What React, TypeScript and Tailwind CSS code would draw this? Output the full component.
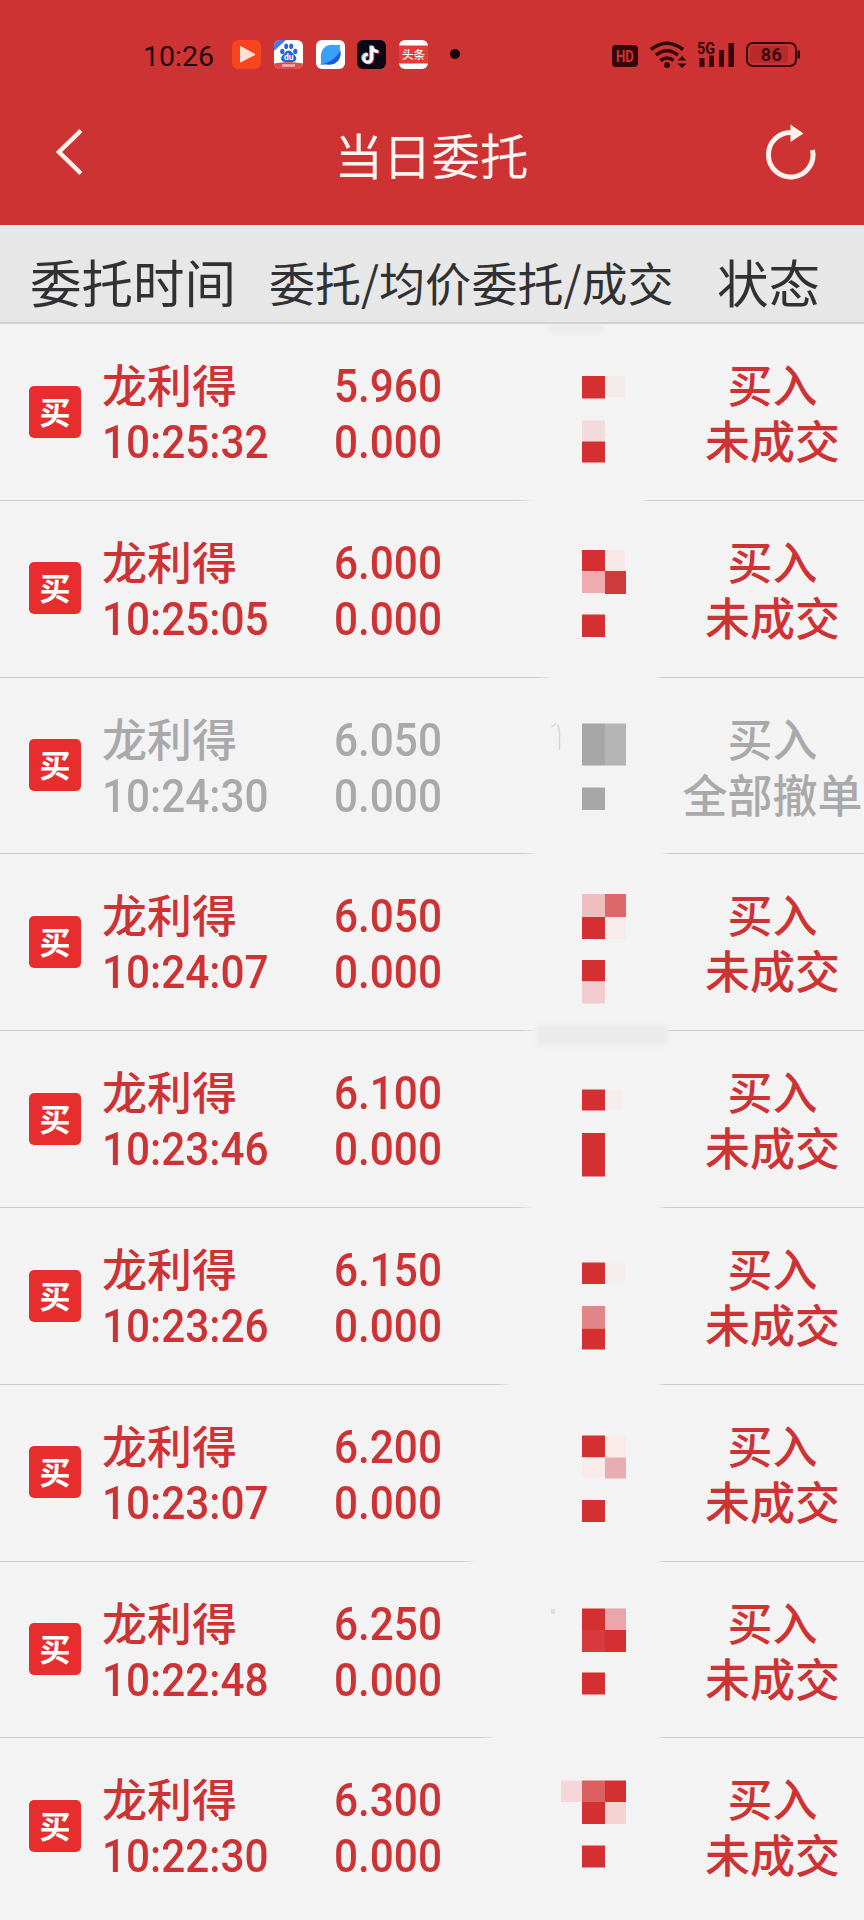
import { useState } from "react";

type Cell = [x: number, y: number, w: number, h: number, fill: string];

interface Order {
  time: string;
  price: string;
  status: string;
  cancelled?: boolean;
  cells: Cell[];
  // divider under the row: where the left part ends and the right part starts
  divider?: [left: number, right: number];
}

const RED = "#d43031";
const FAINT = "#f6ebeb";
const GREY = "#a7a7a7";

const ORDERS: Order[] = [
  {
    time: "10:25:32",
    price: "5.960",
    status: "未成交",
    divider: [533, 641],
    cells: [
      [32, 52, 23, 22.5, RED],
      [55, 52, 20, 21, FAINT],
      [32, 96.5, 23, 21, "#f3dadc"],
      [32, 117.5, 23, 21, RED],
    ],
  },
  {
    time: "10:25:05",
    price: "6.000",
    status: "未成交",
    divider: [553, 655],
    cells: [
      [32, 49, 23, 21, RED],
      [55, 49, 20, 21, "#f9e8e7"],
      [32, 70, 23, 22, "#eeacb0"],
      [55, 70, 21, 23, "#cf3a3b"],
      [32, 113.5, 23, 22.5, RED],
    ],
  },
  {
    time: "10:24:30",
    price: "6.050",
    status: "全部撤单",
    cancelled: true,
    divider: [540, 661],
    cells: [
      [32, 45.5, 23, 42, GREY],
      [55, 45.5, 21, 42, "#b4b4b4"],
      [32, 109.5, 23, 22.5, GREY],
    ],
  },
  {
    time: "10:24:07",
    price: "6.050",
    status: "未成交",
    divider: [537, 664],
    cells: [
      [32, 40, 23, 23, "#f1bebf"],
      [55, 40, 21, 23, "#dd686a"],
      [32, 63, 23, 22, RED],
      [55, 63, 21, 22, "#f7ebeb"],
      [32, 106, 23, 21.5, RED],
      [32, 127.5, 23, 22, "#f1cdd0"],
    ],
  },
  {
    time: "10:23:46",
    price: "6.100",
    status: "未成交",
    divider: [533, 658],
    cells: [
      [32, 58.5, 23, 21, RED],
      [55, 58.5, 18, 21, "#f5eeee"],
      [32, 102, 23, 43.5, RED],
    ],
  },
  {
    time: "10:23:26",
    price: "6.150",
    status: "未成交",
    divider: [512, 656],
    cells: [
      [32, 54.5, 23, 21.5, RED],
      [55, 54.5, 20, 21, "#f5eeee"],
      [32, 98, 23, 22.5, "#e2868a"],
      [32, 120.5, 23, 21, RED],
    ],
  },
  {
    time: "10:23:07",
    price: "6.200",
    status: "未成交",
    divider: [476, 656],
    cells: [
      [32, 50.5, 23, 22, RED],
      [55, 50.5, 21, 22, "#f9ebea"],
      [32, 72.5, 23, 20, "#f8ebeb"],
      [55, 72.5, 21, 21, "#e8adb0"],
      [32, 115, 23, 22, RED],
    ],
  },
  {
    time: "10:22:48",
    price: "6.250",
    status: "未成交",
    divider: [496, 656],
    cells: [
      [32, 46.5, 23, 21.5, RED],
      [55, 46.5, 21, 21.5, "#e9a6ab"],
      [32, 68, 23, 22, "#d63a3c"],
      [55, 68, 21, 22, RED],
      [32, 110.5, 23, 22, RED],
      [1, 47, 4, 5, "#dddddd"],
    ],
  },
  {
    time: "10:22:30",
    price: "6.300",
    status: "未成交",
    cells: [
      [11, 42.5, 21, 21.5, "#f6d7d9"],
      [32, 42.5, 23, 21.5, "#da6062"],
      [55, 42.5, 21, 21.5, RED],
      [32, 64, 23, 22, RED],
      [55, 64, 21, 22, "#f6d3d3"],
      [32, 107.5, 23, 22, RED],
    ],
  },
];

function AppIcons() {
  return (
    <div className="flex gap-[12.8px]">
      <svg width="29" height="29" viewBox="0 0 29 29">
        <rect width="29" height="29" rx="6" fill="#f8441f" />
        <path d="M8.5 6.5v15.5L23 14.5z" fill="#ffe3d5" stroke="#ffe3d5" strokeLinejoin="round" />
      </svg>
      <svg width="29" height="29" viewBox="0 0 29 29">
        <rect width="29" height="29" rx="6" fill="#fff" />
        <path d="M0 11V6a6 6 0 0 1 6-6h6z" fill="#4b78e0" />
        <g fill="#2a62d9">
          <ellipse cx="8.3" cy="11.5" rx="2.1" ry="2.8" />
          <ellipse cx="12.2" cy="6.3" rx="2" ry="2.8" />
          <ellipse cx="17.2" cy="6.3" rx="2" ry="2.8" />
          <ellipse cx="21.3" cy="11.5" rx="2.1" ry="2.8" />
          <path d="M14.7 10.5c3 0 4 3 6 4.8c3 3 1.5 6.7-2 6.700h-8c-3.500 0-5-3.700-2-6.700c2-1.800 3-4.800 6-4.800z" />
        </g>
        <text x="14.7" y="20" textAnchor="middle" fill="#fff" fontSize="8.5" fontWeight="700" fontFamily="Roboto, sans-serif">du</text>
        <path d="M0 23.5q14.5-3 29 0a6 6 0 0 1-6 5.5H6a6 6 0 0 1-6-5.5z" fill="#df4a4a" />
        <path d="M8 25.5h13" stroke="#f3b5b0" strokeWidth="2.5" />
      </svg>
      <svg width="29" height="29" viewBox="0 0 29 29">
        <rect width="29" height="29" rx="6" fill="#fff" />
        <path d="M24.5 4.5c-1 2-.8 3.5-.2 6.5c1.5 8-4 13.5-10.3 13.5c-3 0-5-1-9.5.3c1-2.5.5-4 .4-7C4.5 9 10 4.8 15.5 4.8c3.5 0 6 .9 9-.3z" fill="#39a0fb" />
        <path d="M24.5 11c.8 8-4 13.5-10.5 13.5c-3 0-5-1-9.5.3C14 22.5 20 18 24.5 11z" fill="#1c57d8" />
      </svg>
      <svg width="29" height="29" viewBox="0 0 29 29">
        <rect width="29" height="29" rx="6" fill="#0c0714" />
        <g fill="none" strokeWidth="3">
          <path d="M14.5 6v12.3a4 4 0 1 1-4-4M14.5 6c.5 3.5 3 5.5 6.5 5.6" stroke="#35e3e6" transform="translate(-.8 -.6)" />
          <path d="M15 6v12.3a4 4 0 1 1-4-4M15 6c.5 3.5 3 5.5 6.5 5.6" stroke="#f0305a" transform="translate(.8 .6)" />
          <path d="M14.8 6v12.3a4 4 0 1 1-4-4M14.8 6c.5 3.5 3 5.5 6.5 5.6" stroke="#fff" />
        </g>
      </svg>
      <svg width="29" height="29" viewBox="0 0 29 29">
        <rect width="29" height="29" rx="6" fill="#fff" />
        <path d="M0 5.5h29v18H0z" fill="#e63a35" />
        <text x="14.5" y="18.7" textAnchor="middle" fill="#fff" fontSize="11.5" fontWeight="500" fontFamily="Noto Sans CJK SC, sans-serif">头条</text>
      </svg>
    </div>
  );
}

function StatusIcons() {
  return (
    <svg width="194" height="34" viewBox="0 0 194 34" fill="#350508">
      <rect x="2" y="7" width="26" height="22" rx="4" />
      <text x="15" y="23.5" textAnchor="middle" fill="#cd3333" fontSize="16" fontWeight="700" fontFamily="Roboto, sans-serif" textLength="18" lengthAdjust="spacingAndGlyphs">HD</text>

      <g fill="none" stroke="#350508" strokeWidth="3.6">
        <path d="M41 11.5q16-12.500 32 0" />
        <path d="M46 17q11-8.500 22 0" />
        <path d="M50.500 22.500q6.500-5 13 0" />
      </g>
      <circle cx="57" cy="27" r="3" />
      <path d="M67.500 22.500l4.500-4.500 4.500 4.500zM67.500 25.500l4.500 4.500 4.500-4.500z" />

      <text x="87" y="16" fontSize="16.500" fontWeight="700" fontFamily="Roboto, sans-serif" textLength="18" lengthAdjust="spacingAndGlyphs">5G</text>
      <path d="M89.500 20h5v9h-5zM99 17.500h5v11.500h-5zM109 12h5v17h-5zM118.500 5h5.500v24h-5.500z" />

      <rect x="137" y="5" width="49" height="23" rx="6" fill="none" stroke="#350508" strokeWidth="2" />
      <rect x="140" y="8" width="38" height="17" rx="3" fill="#b92a2b" />
      <path d="M187.500 12.500h2.500v8h-2.500z" />
      <text x="161.500" y="22.800" textAnchor="middle" fontSize="18" fontWeight="600" fontFamily="Roboto, sans-serif" letterSpacing=".5">86</text>
    </svg>
  );
}

function NavBar({ onRefresh }: { onRefresh: () => void }) {
  return (
    <div className="flex h-[145px] items-start justify-between pr-[46px] pl-[54px]">
      <button type="button" aria-label="back" className="mt-[47px]">
        <svg width="32" height="50" viewBox="0 0 32 50" fill="none" stroke="#fff1ea" strokeWidth="4.5">
          <path d="M27 3.500L5 25l22 21.500" />
        </svg>
      </button>
      <h1 className="mt-[39px] ml-[13px] text-[48.5px] leading-[70px] text-[#fff3f2]">当日委托</h1>
      <button type="button" aria-label="refresh" className="mt-[42px]" onClick={onRefresh}>
        <svg width="54" height="62" viewBox="0 0 54 62">
          <path d="M28 10.500A22.300 22.300 0 1 0 48.500 28" fill="none" stroke="#fff1ec" strokeWidth="5" />
          <path d="M26.500 2.500l13 9-13 8.500z" fill="#fff1ec" />
        </svg>
      </button>
    </div>
  );
}

function Digits({ children }: { children: string }) {
  return <span className="block h-14 origin-left scale-x-[.92] whitespace-nowrap font-[Roboto] text-[46px] leading-14 font-medium">{children}</span>;
}

function OrderRow({ order }: { order: Order }) {
  return (
    <li className={`flex h-[176.8px] flex-col ${order.cancelled ? "text-[#a9a9a9]" : "text-[#cd3335]"}`}>
      <div className="flex flex-1 overflow-hidden">
        <div className="mt-[61.600px] ml-[29px] flex size-[52px] shrink-0 justify-center rounded-[5px] bg-[#e82d2e] text-[31px] leading-[49px] font-bold text-white">
          买
        </div>
        <div className="mt-[32px] ml-[21px] w-[232px] shrink-0">
          <div className="h-[58px] text-[45px] leading-14 font-medium">龙利得</div>
          <Digits>{order.time}</Digits>
        </div>
        <div className="mt-[34px] w-[216px] shrink-0">
          <Digits>{order.price}</Digits>
          <Digits>0.000</Digits>
        </div>
        <svg className="w-[110px] shrink-0" height="175" viewBox="0 0 110 175">
          {order.cells.map(([x, y, w, h, fill]) => (
            <rect key={`${x}-${y}`} x={x} y={y} width={w} height={h} fill={fill} />
          ))}
          {order.cancelled && <path d="M1.500 49l5-3.500M8 47l1.500 7v18" fill="none" stroke="#d6d6d6" strokeWidth="1.500" />}
        </svg>
        <div className="mt-[32px] -mr-[19px] ml-[2px] flex flex-1 flex-col items-center text-[45px] leading-14 font-medium whitespace-nowrap">
          <span>买入</span>
          <span>{order.status}</span>
        </div>
      </div>
      {order.divider && (
        <div className="flex h-px justify-between">
          <div className="bg-linear-to-r from-[#cbcbcb] from-97% to-transparent" style={{ width: order.divider[0] }} />
          <div className="bg-linear-to-l from-[#cbcbcb] from-96% to-transparent" style={{ width: 864 - order.divider[1] }} />
        </div>
      )}
    </li>
  );
}

export default function App() {
  const [orders, setOrders] = useState(ORDERS);

  return (
    <div className="relative h-[1920px] w-[864px] overflow-hidden bg-[#f3f3f3] font-['Noto_Sans_CJK_SC',sans-serif]">
      <header className="h-[225px] bg-[#cd3333]">
        <div className="flex h-20 items-start pt-[38px] pl-[143px]">
          <span className="w-[89px] font-[Roboto] text-[28.500px] leading-[38px] text-[#20090a]">10:26</span>
          <div className="mt-[2px]">
            <AppIcons />
          </div>
          <div className="mt-[11px] ml-[22px] size-[10px] rounded-full bg-[#180406]" />
          <div className="ml-[150px]">
            <StatusIcons />
          </div>
        </div>
        <NavBar onRefresh={() => setOrders([...ORDERS])} />
      </header>

      <div className="flex h-[99px] border-b-2 border-[#cfcfcf] bg-[#e7e7e8] pt-[21px] leading-[70px] whitespace-nowrap text-[#303133]">
        <div className="w-[269px] pl-[30px] text-[51.500px]">委托时间</div>
        <div className="w-[202.500px] text-[46px]">委托/均价</div>
        <div className="w-[245.500px] text-[46px]">委托/成交</div>
        <div className="text-[51.500px]">状态</div>
      </div>

      <ul>
        {orders.map((o) => (
          <OrderRow key={o.time} order={o} />
        ))}
      </ul>
      <div className="absolute top-[1025px] left-[537px] h-[21px] w-[130px] rounded bg-[#ebebeb] blur-[2px]" />
      <div className="absolute top-[326px] left-[548px] h-[7px] w-[56px] rounded-full bg-[#ebebeb] blur-[2px]" />
    </div>
  );
}
